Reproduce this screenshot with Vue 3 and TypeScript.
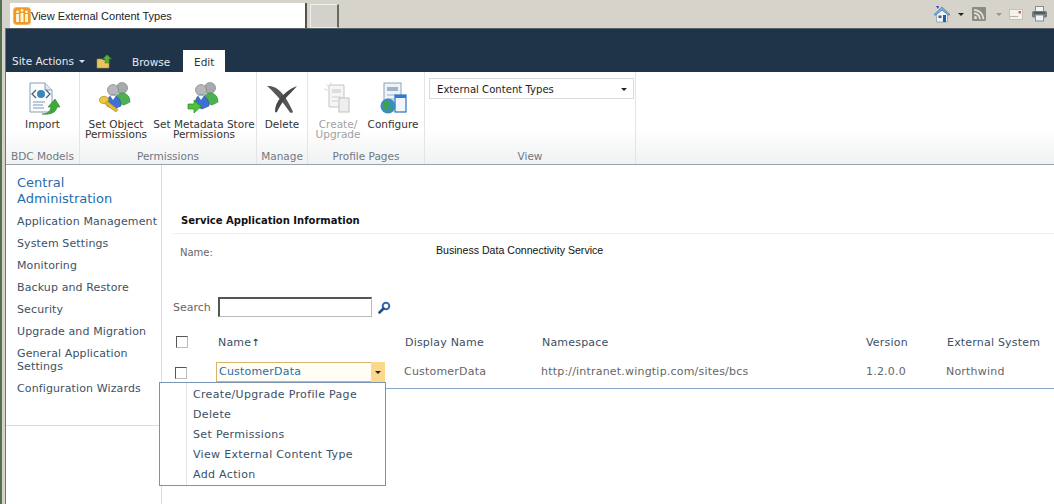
<template>
  <div class="page">
    <div class="browser-bar">
      <div class="browser-tab">
        <svg class="tab-icon" width="18" height="18" viewBox="0 0 18 18">
          <rect x="0.500" y="0.500" width="17" height="17" rx="3" fill="#f09a22" stroke="#efb56e" />
          <rect x="3" y="7" width="3" height="8" fill="#fff3d8" />
          <rect x="7.500" y="6" width="3" height="9" fill="#fff3d8" />
          <rect x="12" y="7" width="3" height="8" fill="#fff3d8" />
          <circle cx="4.500" cy="4.800" r="1.400" fill="#fff3d8" />
          <circle cx="9" cy="3.400" r="1.400" fill="#fff3d8" />
          <circle cx="13.500" cy="4.800" r="1.400" fill="#fff3d8" />
        </svg>
        <span>View External Content Types</span>
      </div>
      <div class="new-tab"></div>
      <div class="browser-tools">
        <svg class="t-home" width="18" height="18" viewBox="0 0 18 18">
          <path d="M3 1h3l-1 3z" fill="#2c46b0" />
          <path d="M3.500 9.500 9 5l5.500 4.500V17h-11z" fill="#f0f3f6" stroke="#7d97b3" stroke-width=".7" />
          <path d="M1 9.500 9 2l8 7.500-1.500.8L9 4.800 2.500 10.300z" fill="#7fb0dc" stroke="#3f6fa8" stroke-width=".6" />
          <rect x="5.500" y="10.500" width="3" height="2.500" fill="#3c5f8c" />
          <rect x="10" y="10" width="3" height="7" fill="#1f5fa8" />
        </svg>
        <i class="caret dark t-c1"></i>
        <svg class="t-rss" width="14" height="14" viewBox="0 0 14 14">
          <rect width="14" height="14" rx="1" fill="#8b8b85" />
          <circle cx="3.500" cy="10.500" r="1.500" fill="#e4e2dc" />
          <path d="M2 6.200a6 6 0 0 1 6 6M2 2.800a9.500 9.500 0 0 1 9.500 9.500" fill="none" stroke="#e4e2dc" stroke-width="1.700" />
        </svg>
        <i class="caret pale t-c2"></i>
        <svg class="t-mail" width="14" height="11" viewBox="0 0 14 11">
          <rect x=".5" y=".5" width="13" height="10" fill="#f4f2ee" stroke="#c5c2ba" />
          <path d="M1 7.500h8" stroke="#b9b5ac" />
          <rect x="9.500" y="2" width="2.500" height="2.500" fill="#d0606a" />
        </svg>
        <svg class="t-print" width="15" height="16" viewBox="0 0 15 16">
          <rect x="3.500" y="0.500" width="8" height="5" fill="#f2f2f0" stroke="#8d8d8d" />
          <rect x="0" y="5" width="15" height="6.500" rx="1.500" fill="#77797c" />
          <rect x="3.500" y="9" width="8" height="6" fill="#eef2f5" stroke="#7f8f9a" />
          <path d="M2 7h11" stroke="#33383d" />
        </svg>
      </div>
    </div>

    <div class="window">
      <div class="suite-bar">
        <span class="site-actions">Site Actions <i class="caret light"></i></span>
        <svg class="up-icon" width="17" height="15" viewBox="0 0 17 15">
          <path d="M1 5h5l1 1h6v8H1z" fill="#e8c65f" stroke="#b08d2f" stroke-width=".6" />
          <path d="M9 9 9 5 6.800 5 11 .6 15.500 5 13 5 13 9z" fill="#58ad3c" stroke="#2e7d22" stroke-width=".5" />
        </svg>
        <span class="top-tab">Browse</span>
        <span class="top-tab active">Edit</span>
      </div>

      <div class="ribbon">
        <div v-for="group in groups" :key="group.label" class="rib-group" :style="{ width: group.width + 'px' }">
          <div class="rib-buttons">
            <div
              v-for="btn in group.buttons"
              :key="btn.id"
              class="rib-btn"
              :class="{ disabled: btn.disabled }"
              :style="{ width: btn.width + 'px' }"
            >
              <svg width="34" height="34" viewBox="0 0 34 34" class="rib-icon">
                <template v-if="btn.id === 'import'">
                  <path d="M4 2h15l7 7v22H4z" fill="#fbfcfe" stroke="#8c9db3" />
                  <path d="M19 2v7h7" fill="#dfe7f0" stroke="#8c9db3" />
                  <path d="M10 9 6 13l4 4M20 9l4 4-4 4" fill="none" stroke="#50606f" stroke-width="1.300" />
                  <circle cx="15" cy="13" r="4" fill="#3b86b8" />
                  <path d="M7 21h12M7 24h10M7 27h11" stroke="#7e93b7" />
                  <path d="M16 33c5 0 8-2 9-7h-3l7-8 5 8h-3c-1 5-5 8-15 7z" fill="#3fa83a" stroke="#28802a" stroke-width=".6" />
                </template>
                <template v-else-if="btn.id === 'perm' || btn.id === 'meta'">
                  <circle cx="23" cy="7" r="5.500" fill="#a6aaae" stroke="#777" stroke-width=".6" />
                  <path d="M16 21c0-6 3-9 7-9s8 3 8 9l-6 3z" fill="#4cb150" stroke="#2b8231" stroke-width=".6" />
                  <circle cx="14" cy="9" r="5.500" fill="#b6b8bb" stroke="#777" stroke-width=".6" />
                  <path d="M8 25c0-7 2-11 6-11s8 4 8 11l-7 3z" fill="#3f6fd0" stroke="#29509e" stroke-width=".6" />
                  <path d="M11 14.500 14 19l3-4.500z" fill="#fff" />
                  <template v-if="btn.id === 'perm'">
                    <ellipse cx="5" cy="19" rx="4.500" ry="3.500" fill="#ecc93e" stroke="#a98a1e" stroke-width=".7" />
                    <path d="M8 20 19 28.500l-2 2.500L6 23z" fill="#e2b935" stroke="#a98a1e" stroke-width=".6" />
                  </template>
                  <path v-else d="M1 23h6v-4l7 6.500L7 32v-4H1z" fill="#4fc23c" stroke="#2b8a24" stroke-width=".7" />
                </template>
                <template v-else-if="btn.id === 'delete'">
                  <path d="M2 5c8-1 14 5 18 11 3 5 6 10 8 15-1 1-2 1-3 .5C21 26 17 20 12 15 9 12 6 8 2 5z" fill="#55575a" />
                  <path d="M32 5c-3 4-8 8-12 13-3 4-6 8-8 13-1 1-2 0-2-1 0-5 2-9 6-14 4-4 10-9 16-11z" fill="#46484a" />
                </template>
                <template v-else-if="btn.id === 'create'">
                  <path d="M10 4h13v22H8V4z" fill="#f5f5f5" stroke="#c4c4c4" />
                  <rect x="11" y="8" width="9" height="4" fill="#dedede" />
                  <path d="M11 16h9M11 20h6" stroke="#cfcfcf" />
                  <rect x="18" y="17" width="10" height="14" fill="#eeeeee" stroke="#c0c0c0" />
                  <path d="M5 3l3 4M3 8l4 1M10 1v4" stroke="#dddddd" />
                </template>
                <template v-else>
                  <rect x="8" y="2" width="17" height="24" fill="#eef3f8" stroke="#8ea2b8" />
                  <rect x="11" y="6" width="11" height="4" fill="#9fb4c8" />
                  <path d="M11 14h9M11 18h9" stroke="#9fb4c8" />
                  <rect x="19" y="14" width="11" height="17" fill="#f2f7fc" stroke="#2b72c4" stroke-width="1.200" />
                  <rect x="19" y="14" width="11" height="3" fill="#2f7bd3" />
                  <circle cx="12" cy="25" r="7.500" fill="#3a8dbd" />
                  <path d="M7 22c3-2 6-2 7 0s-3 2-3 5-3 2-4-1zM14 26l3 0-2 4-2-1z" fill="#3fa447" />
                </template>
              </svg>
              <span class="rib-label">{{ btn.top }}<br v-if="btn.bottom" />{{ btn.bottom }}</span>
            </div>
            <div v-if="group.label === 'View'" class="view-select">
              <span>External Content Types</span>
              <i class="caret dark small"></i>
            </div>
          </div>
          <div class="rib-caption">{{ group.label }}</div>
        </div>
      </div>

      <div class="content-wrap">
        <nav class="side-nav">
          <a class="nav-title">Central Administration</a>
          <a v-for="item in navItems" :key="item" class="nav-item">{{ item }}</a>
          <div class="nav-rule"></div>
        </nav>

        <main class="content">
          <h2 class="section-title">Service Application Information</h2>
          <div class="info-row">
            <span class="info-label">Name:</span>
            <span class="info-value">Business Data Connectivity Service</span>
          </div>

          <div class="search-row">
            <label>Search</label>
            <input type="text" class="search-input" />
            <svg width="13" height="13" viewBox="0 0 13 13">
              <circle cx="8" cy="5" r="3.300" fill="#fff" stroke="#2f6ea8" stroke-width="2" />
              <path d="M5.500 7.500 1.500 11.500" stroke="#24507e" stroke-width="2.600" stroke-linecap="round" />
            </svg>
          </div>

          <div class="grid-row head">
            <span class="check"></span>
            <span>Name<b class="sort">↑</b></span>
            <span>Display Name</span>
            <span>Namespace</span>
            <span>Version</span>
            <span>External System</span>
          </div>
          <div class="grid-row data">
            <span class="check"></span>
            <span class="name-cell">
              <span class="name-link">CustomerData</span>
              <span class="name-drop"><i class="caret dark small"></i></span>
            </span>
            <span class="shift">CustomerData</span>
            <span class="shift">http://intranet.wingtip.com/sites/bcs</span>
            <span>1.2.0.0</span>
            <span class="shift">Northwind</span>
          </div>

          <ul class="context-menu">
            <li v-for="item in menuItems" :key="item">{{ item }}</li>
          </ul>
        </main>
      </div>
    </div>
  </div>
</template>

<script setup lang="ts">
interface RibbonButton {
  id: string
  top: string
  bottom?: string
  width: number
  disabled?: boolean
}

interface RibbonGroup {
  label: string
  width: number
  buttons: RibbonButton[]
}

const groups: RibbonGroup[] = [
  { label: 'BDC Models', width: 73, buttons: [{ id: 'import', top: 'Import', width: 73 }] },
  {
    label: 'Permissions',
    width: 176,
    buttons: [
      { id: 'perm', top: 'Set Object', bottom: 'Permissions', width: 72 },
      { id: 'meta', top: 'Set Metadata Store', bottom: 'Permissions', width: 104 },
    ],
  },
  { label: 'Manage', width: 50, buttons: [{ id: 'delete', top: 'Delete', width: 50 }] },
  {
    label: 'Profile Pages',
    width: 116,
    buttons: [
      { id: 'create', top: 'Create/', bottom: 'Upgrade', width: 60, disabled: true },
      { id: 'config', top: 'Configure', width: 50 },
    ],
  },
  { label: 'View', width: 210, buttons: [] },
]

const navItems = [
  'Application Management',
  'System Settings',
  'Monitoring',
  'Backup and Restore',
  'Security',
  'Upgrade and Migration',
  'General Application Settings',
  'Configuration Wizards',
]

const menuItems = [
  'Create/Upgrade Profile Page',
  'Delete',
  'Set Permissions',
  'View External Content Type',
  'Add Action',
]
</script>

<style>
html,
body {
  margin: 0;
  background: #fff;
}
</style>

<style scoped>
.page {
  width: 1054px;
  height: 504px;
  overflow: hidden;
  display: flex;
  flex-direction: column;
  font-family: 'DejaVu Sans', Verdana, sans-serif;
  font-size: 11px;
  color: #3b4f65;
  background: #d6d3cb;
  border-left: 2px solid #55704e;
  box-sizing: border-box;
}

.browser-bar {
  height: 28px;
  flex: none;
  display: flex;
  align-items: flex-end;
  padding-left: 8px;
  box-sizing: border-box;
}

.browser-tab {
  width: 297px;
  height: 25px;
  background: #fff;
  border-right: 2px solid #55534e;
  display: flex;
  align-items: center;
  padding-left: 3px;
  box-sizing: border-box;
  font-family: 'Liberation Sans', Arial, sans-serif;
  font-size: 11px;
  color: #222;
}

.new-tab {
  width: 29px;
  height: 24px;
  margin-left: 3px;
  background: #d3d1cc;
  border: 1px solid #f0efec;
  border-right: 2px solid #6a6862;
  box-sizing: border-box;
}

.browser-tools {
  margin-left: auto;
  align-self: flex-start;
  height: 28px;
  display: flex;
  align-items: center;
  padding-right: 7px;
}

.t-c1 {
  margin-left: 7px;
}

.t-rss {
  margin-left: 8px;
}

.t-c2 {
  margin-left: 10px;
}

.t-mail {
  margin-left: 7px;
}

.t-print {
  margin-left: 9px;
}

.caret {
  display: inline-block;
  width: 0;
  height: 0;
  border-left: 3px solid transparent;
  border-right: 3px solid transparent;
  border-top: 3px solid #222;
}

.caret.pale {
  border-top-color: #98958e;
}

.caret.light {
  border-top-color: #d8dfe8;
  margin: 0 0 2px 2px;
}

.window {
  flex: 1;
  display: flex;
  flex-direction: column;
  margin-left: 3px;
  border-left: 1px solid #6e7670;
  min-height: 0;
  position: relative;
  background: #fff;
}

.suite-bar {
  height: 44px;
  flex: none;
  background: #1f3349;
  border-top: 1px solid #55606b;
  box-sizing: border-box;
  display: flex;
  align-items: flex-end;
  color: #e6ebf0;
  padding-left: 6px;
}

.site-actions {
  padding-bottom: 5px;
  width: 84px;
  font-size: 10.500px;
}

.up-icon {
  margin-bottom: 3px;
}

.top-tab {
  height: 22px;
  line-height: 24px;
  padding: 0 11px;
  margin-left: 8px;
  box-sizing: border-box;
  font-size: 10.500px;
}

.top-tab.active {
  width: 42px;
  padding: 0;
  text-align: center;
  background: #fff;
  color: #333;
  margin-left: 2px;
}

.ribbon {
  height: 93px;
  flex: none;
  display: flex;
  background: linear-gradient(#fff 0, #fff 62%, #f0f1f2 100%);
  border-bottom: 1px solid #9aa2aa;
  box-sizing: border-box;
}

.rib-group {
  display: flex;
  flex-direction: column;
  border-right: 1px solid #e2e4e6;
}

.rib-buttons {
  flex: 1;
  display: flex;
  position: relative;
}

.rib-btn {
  display: flex;
  flex-direction: column;
  align-items: center;
  padding-top: 9px;
  font-size: 10.500px;
  line-height: 10px;
  color: #333;
  text-align: center;
  white-space: nowrap;
}

.rib-btn.disabled {
  color: #a2a2a2;
}

.rib-icon {
  margin-bottom: 3px;
}

.rib-label {
  display: block;
  margin-top: 1px;
}

.view-select {
  margin: 6px 0 0 4px;
  width: 205px;
  height: 21px;
  border: 1px solid #d8dadc;
  box-sizing: border-box;
  display: flex;
  align-items: center;
  justify-content: space-between;
  padding: 1px 6px 0 7px;
  background: #fff;
  color: #222;
  font-size: 10.100px;
}

.rib-caption {
  height: 19px;
  line-height: 22px;
  text-align: center;
  color: #6f7882;
  font-size: 10.500px;
}

.content-wrap {
  flex: 1;
  display: flex;
  min-height: 0;
}

.side-nav {
  width: 156px;
  flex: none;
  box-sizing: border-box;
  border-right: 1px solid #dcdcdc;
  padding: 10px 0 0 11px;
  display: flex;
  flex-direction: column;
  position: relative;
}

.nav-title {
  color: #1f6db0;
  font-size: 13px;
  line-height: 16px;
  margin-bottom: 8px;
  width: 110px;
}

.nav-item {
  line-height: 13px;
  margin-bottom: 9px;
  color: #3d5166;
  letter-spacing: 0.120px;
  white-space: normal;
}

.nav-rule {
  margin: 21px 0 0 -11px;
  border-top: 1px solid #dcdcdc;
}

.content {
  flex: 1;
  position: relative;
  padding: 49px 0 0 11px;
  min-width: 0;
}

.section-title {
  margin: 0;
  padding-left: 8px;
  font-size: 10px;
  line-height: 14px;
  color: #111;
  padding-bottom: 5px;
  border-bottom: 1px solid #f0f0f0;
}

.info-row {
  display: flex;
  padding-left: 7px;
  margin-top: 10px;
  height: 22px;
}

.info-label {
  width: 256px;
  font-size: 10px;
  color: #666;
  padding-top: 3px;
}

.info-value {
  font-family: 'Liberation Sans', Arial, sans-serif;
  font-size: 10.600px;
  line-height: 14px;
  color: #111;
  margin-top: -1px;
}

.search-row {
  display: flex;
  align-items: center;
  margin-top: 30px;
  color: #666;
  height: 22px;
}

.search-row label {
  width: 45px;
}

.search-input {
  width: 154px;
  height: 20px;
  box-sizing: border-box;
  border: 1px solid #bbbbb5;
  border-top: 2px solid #555;
  border-left: 2px solid #555;
  margin: 0 6px 0 0;
  padding: 0;
  background: #fff;
}

.grid-row {
  display: grid;
  grid-template-columns: 42px 187px 137px 324px 81px 1fr;
  align-items: center;
  margin-left: 3px;
  white-space: nowrap;
  letter-spacing: 0.200px;
}

.grid-row.head {
  height: 26px;
  margin-top: 11px;
  color: #3b4f65;
}

.grid-row.data {
  height: 29px;
  box-sizing: border-box;
  padding-bottom: 6px;
  margin-top: 5px;
  color: #666;
  border-bottom: 1px solid #88a6c8;
}

.shift {
  margin-left: -1px;
}

.sort {
  font-weight: normal;
  font-size: 10px;
  color: #222;
}

.check {
  width: 12px;
  height: 12px;
  box-sizing: border-box;
  border: 1px solid #bbb;
  border-top-color: #555;
  border-left-color: #555;
  background: #fff;
}

.grid-row.data .check {
  margin: 4px 0 0 -1px;
}

.name-cell {
  position: relative;
  width: 169px;
  height: 20px;
  margin: 2px 0 0 -2px;
  display: flex;
  box-sizing: border-box;
}

.name-link {
  flex: 1;
  box-sizing: border-box;
  border: 1px solid #d8b56c;
  border-right: none;
  background: #fffdf4;
  color: #1f6db0;
  padding-left: 2px;
  line-height: 18px;
}

.name-drop {
  width: 14px;
  background: #fbd98c;
  display: flex;
  align-items: center;
  justify-content: center;
}

.context-menu {
  position: absolute;
  left: -3px;
  top: 217px;
  width: 227px;
  height: 104px;
  margin: 0;
  padding: 2px 0 0;
  list-style: none;
  box-sizing: border-box;
  border: 1px solid #7a93b5;
  background: linear-gradient(to right, #fff 26px, #e4e4e4 26px, #e4e4e4 27px, #fff 27px);
  z-index: 5;
}

.context-menu li {
  height: 20px;
  line-height: 20px;
  padding-left: 33px;
  color: #3b4f65;
  white-space: nowrap;
  letter-spacing: 0.330px;
}
</style>
